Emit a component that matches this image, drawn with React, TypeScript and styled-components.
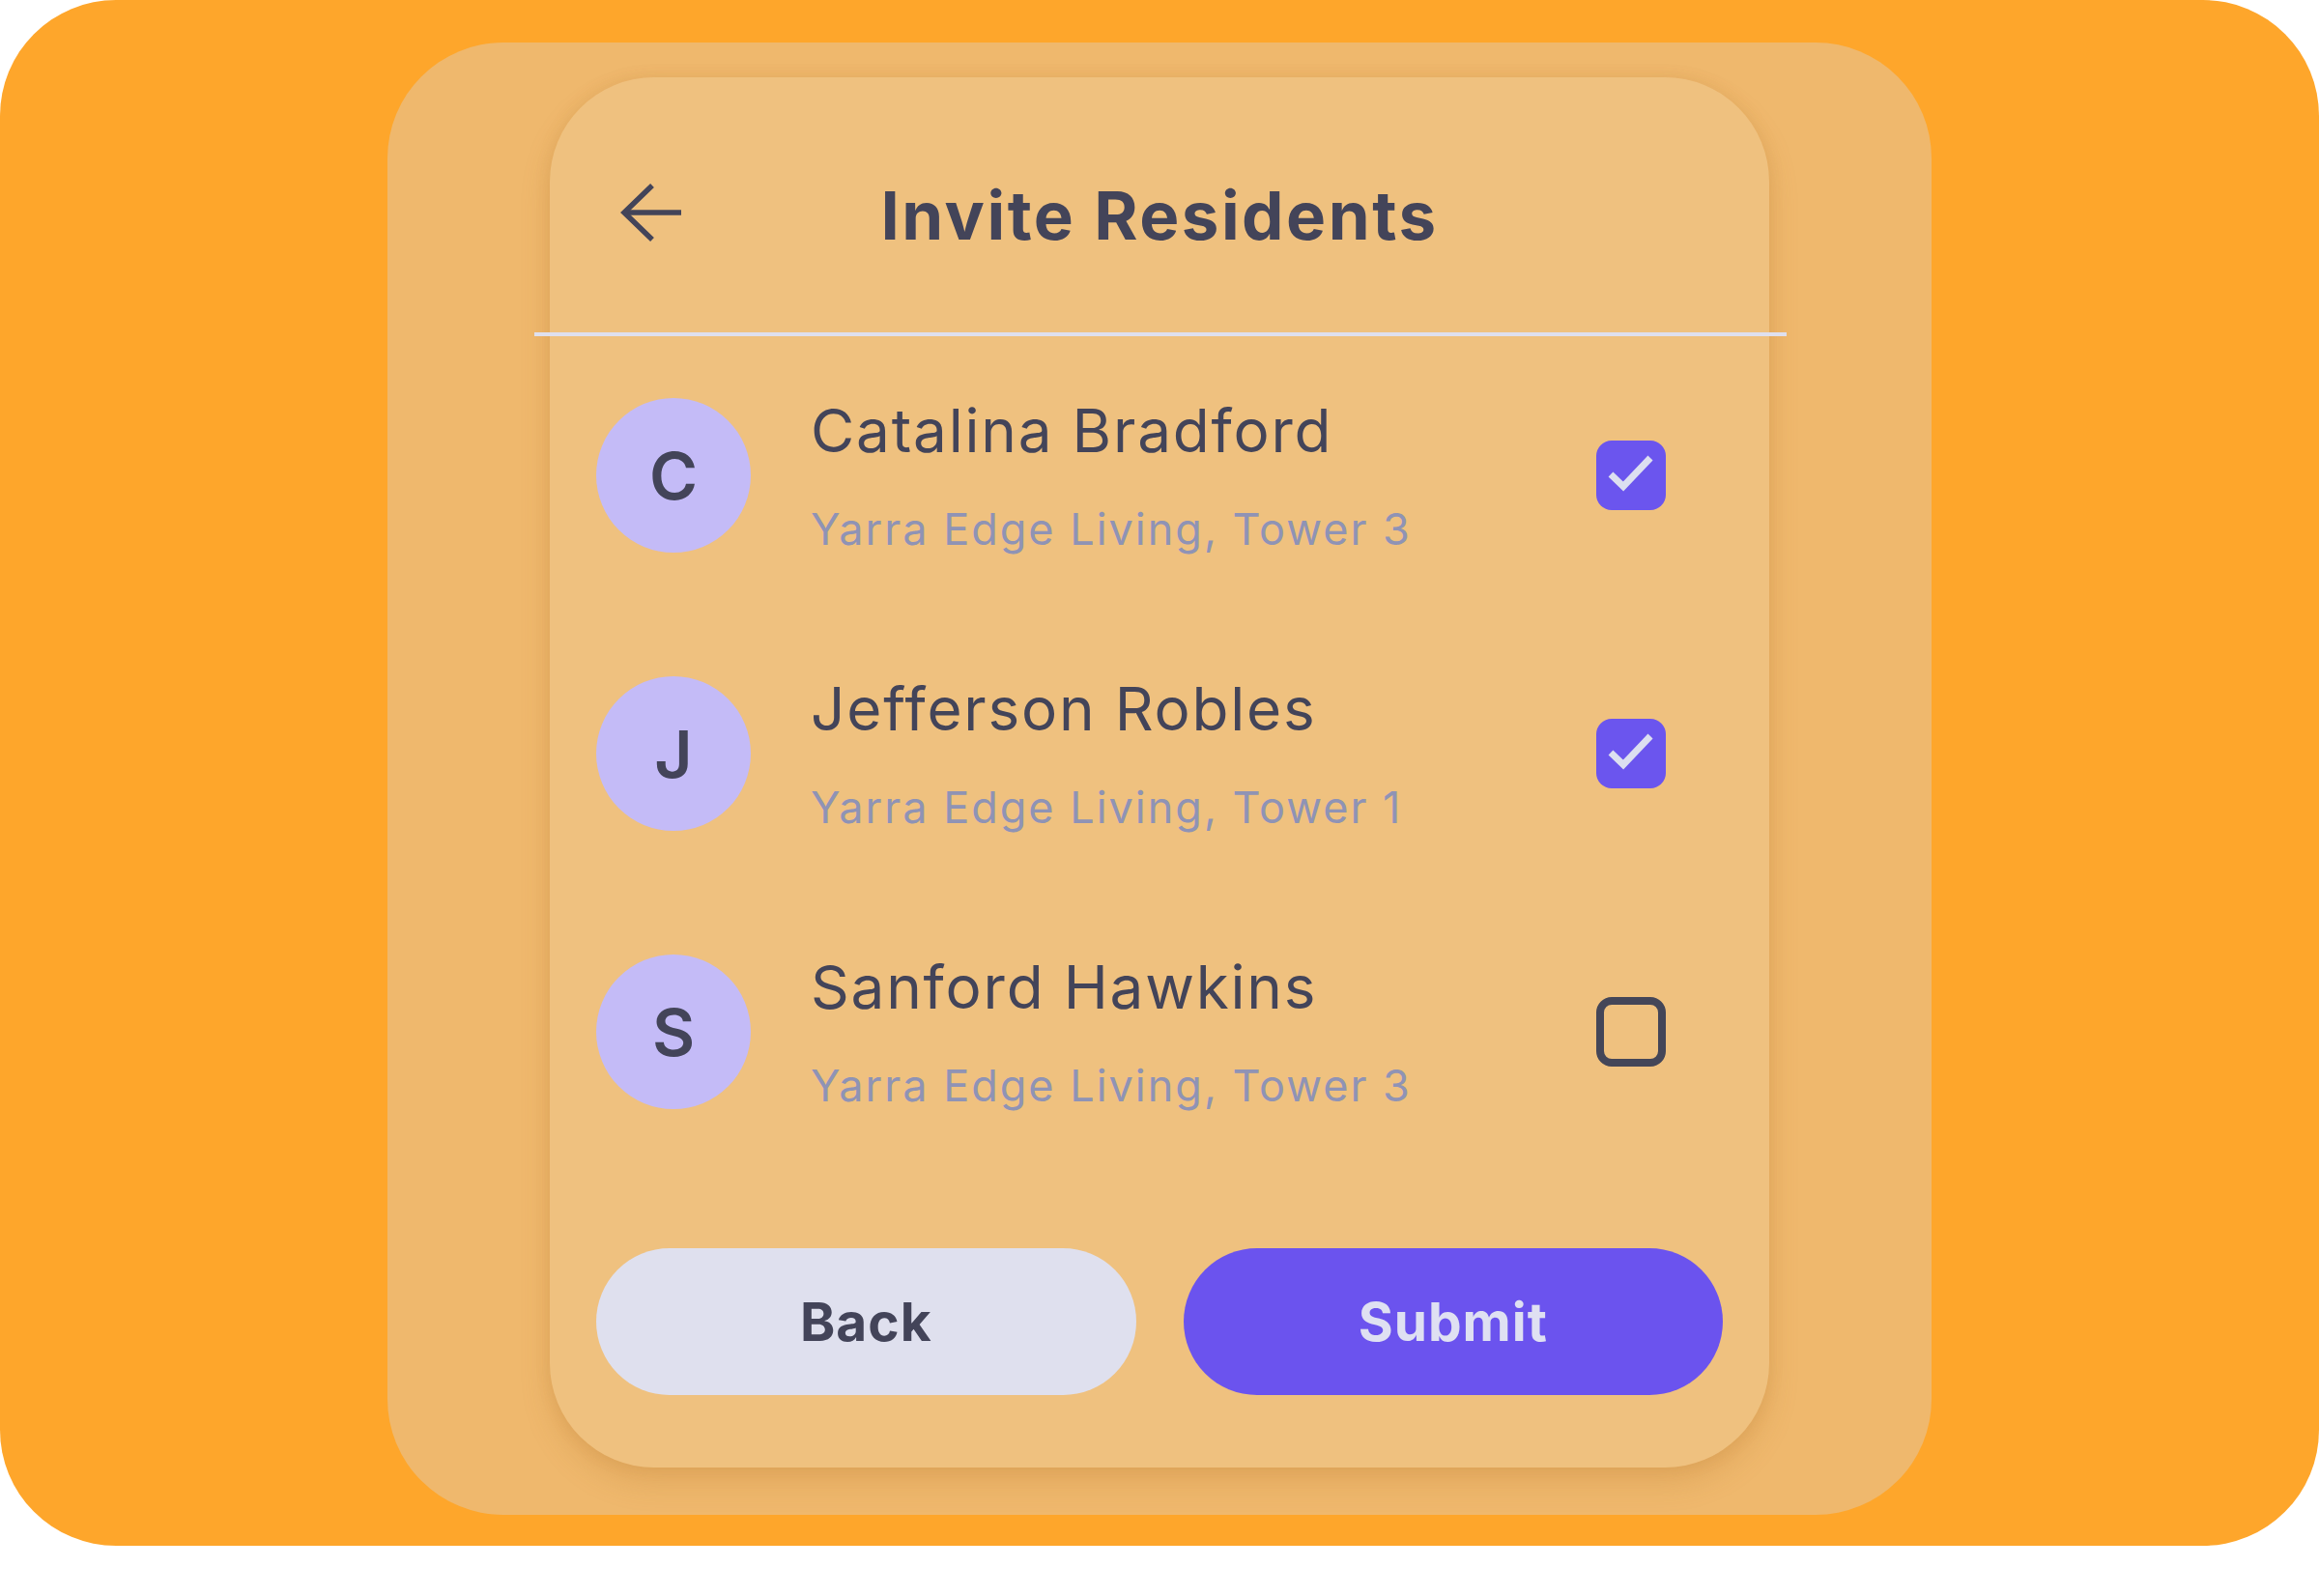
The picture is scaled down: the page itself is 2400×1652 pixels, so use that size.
import React from 'react';
import styled, { createGlobalStyle } from 'styled-components';

const GlobalStyle = createGlobalStyle`
  html, body {
    margin: 0;
    padding: 0;
    background: #ffffff;
  }
  body {
    font-family: 'Inter', 'Noto Sans', sans-serif;
  }
  * {
    box-sizing: border-box;
  }
`;

const residents = [
  { id: 1, name: 'Catalina Bradford', place: 'Yarra Edge Living, Tower 3', checked: true },
  { id: 2, name: 'Jefferson Robles', place: 'Yarra Edge Living, Tower 1', checked: true },
  { id: 3, name: 'Sanford Hawkins', place: 'Yarra Edge Living, Tower 3', checked: false },
];

const Page = styled.div`
  width: 2400px;
  height: 1652px;
  background: #ffffff;
`;

const Stage = styled.div`
  height: 1600px;
  background: #fea62b;
  border-radius: 120px;
  display: flex;
  justify-content: center;
  padding-top: 44px;
`;

const Panel = styled.div`
  width: 1598px;
  height: 1524px;
  background: #efb86d;
  border-radius: 120px;
  display: flex;
  justify-content: center;
  padding-top: 36px;
`;

const Card = styled.div`
  width: 1262px;
  height: 1439px;
  background: #efc17f;
  border-radius: 108px;
  box-shadow: 0 16px 30px rgba(176, 112, 40, 0.22), 0 0 16px rgba(176, 112, 40, 0.14);
  padding: 0 48px 75px;
  display: flex;
  flex-direction: column;
`;

const Header = styled.div`
  display: grid;
  grid-template-columns: 1fr auto 1fr;
  align-items: center;
  height: 264px;
  padding-top: 16px;
`;

const BackIcon = styled.button`
  justify-self: start;
  margin-left: 24px;
  width: 66px;
  height: 66px;
  padding: 0;
  border: none;
  background: transparent;
  display: flex;
  align-items: center;
  justify-content: center;
  cursor: pointer;
`;

const Title = styled.h1`
  margin: 6px 0 0;
  font-size: 69px;
  line-height: 1;
  font-weight: 700;
  color: #434459;
  letter-spacing: 2.5px;
`;

const Divider = styled.div`
  height: 4px;
  background: #dfe0ee;
  margin: 0 -66px 0 -64px;
`;

const List = styled.div`
  display: flex;
  flex-direction: column;
  gap: 128px;
  padding-top: 64px;
`;

const Row = styled.div`
  display: flex;
  align-items: center;
  height: 160px;
`;

const Avatar = styled.div`
  flex: none;
  width: 160px;
  height: 160px;
  border-radius: 50%;
  background: #c4bbf7;
  color: #434459;
  font-size: 68px;
  font-weight: 600;
  display: flex;
  align-items: center;
  justify-content: center;
`;

const Info = styled.div`
  align-self: flex-start;
  flex: 1;
  margin-left: 62px;
  display: flex;
  flex-direction: column;
`;

const Name = styled.div`
  font-size: 62px;
  line-height: 68px;
  font-weight: 400;
  color: #434459;
  letter-spacing: 1.8px;
`;

const Place = styled.div`
  margin-top: 38px;
  font-size: 45px;
  line-height: 60px;
  font-weight: 400;
  color: #8f93b5;
  letter-spacing: 2px;
`;

const Check = styled.span<{ checked: boolean }>`
  flex: none;
  width: 72px;
  height: 72px;
  margin-right: 59px;
  border-radius: 16px;
  background: ${p => (p.checked ? '#6b55ee' : 'transparent')};
  border: ${p => (p.checked ? 'none' : '8px solid #444658')};
  display: flex;
  align-items: center;
  justify-content: center;
`;

const Actions = styled.div`
  margin-top: auto;
  display: flex;
  gap: 49px;
`;

const Button = styled.button<{ primary?: boolean }>`
  flex: 1;
  height: 152px;
  border: none;
  border-radius: 76px;
  background: ${p => (p.primary ? '#6b53ee' : '#dfe0ee')};
  color: ${p => (p.primary ? '#dfe0f2' : '#434459')};
  font-family: inherit;
  font-size: 55px;
  font-weight: 700;
  letter-spacing: 1px;
  cursor: pointer;
`;

const ArrowLeft = () => (
  <svg width="66" height="66" viewBox="0 0 66 66" fill="none">
    <path d="M4 33 H64" stroke="#434459" strokeWidth="5.5" />
    <path d="M34 5 L5 33 L34 61" stroke="#434459" strokeWidth="5.5" strokeLinejoin="miter" />
  </svg>
);

const Tick = () => (
  <svg width="72" height="72" viewBox="0 0 72 72" fill="none">
    <path d="M15 35 L28 47.5 L56 18" stroke="#dcdff0" strokeWidth="7" />
  </svg>
);

const App: React.FC = () => {
  return (
    <Page>
      <GlobalStyle />
      <Stage>
        <Panel>
          <Card>
            <Header>
              <BackIcon aria-label="Back">
                <ArrowLeft />
              </BackIcon>
              <Title>Invite Residents</Title>
              <span />
            </Header>
            <Divider />

            <List>
              {residents.map(r => (
                <Row key={r.id}>
                  <Avatar>{r.name.charAt(0)}</Avatar>
                  <Info>
                    <Name>{r.name}</Name>
                    <Place>{r.place}</Place>
                  </Info>
                  <Check checked={r.checked}>{r.checked && <Tick />}</Check>
                </Row>
              ))}
            </List>

            <Actions>
              <Button>Back</Button>
              <Button primary>Submit</Button>
            </Actions>
          </Card>
        </Panel>
      </Stage>
    </Page>
  );
};

export default App;
